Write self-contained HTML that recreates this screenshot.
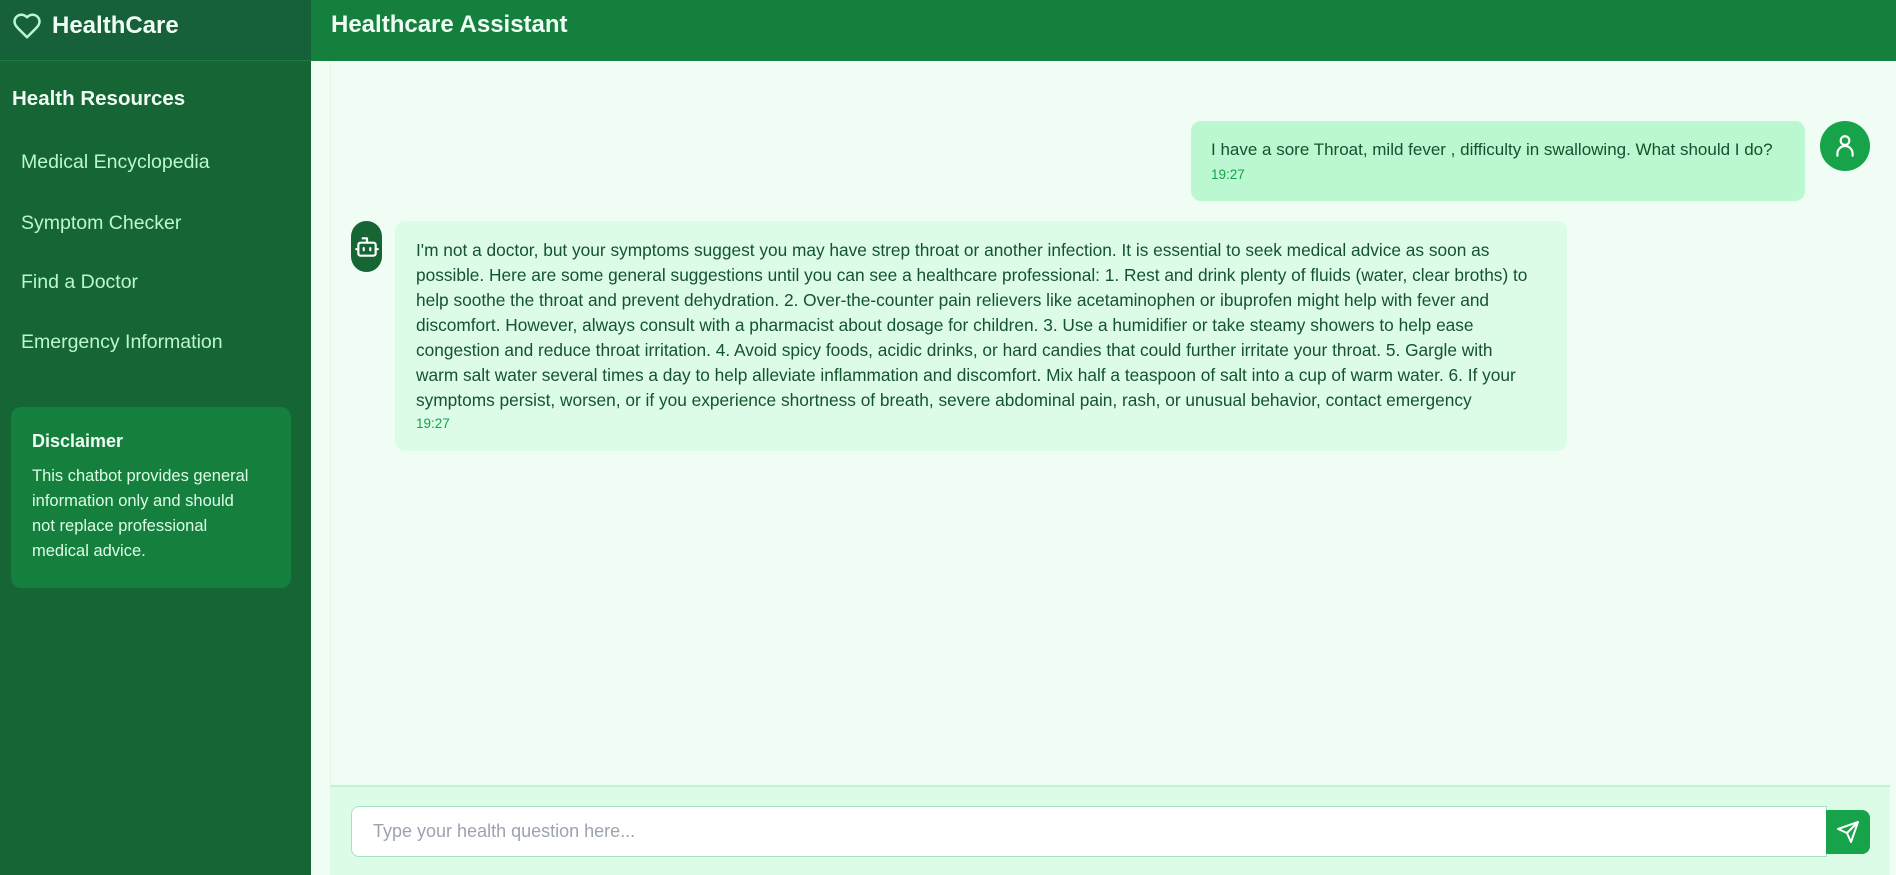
<!DOCTYPE html>
<html><head><meta charset="utf-8"><style>
*{box-sizing:border-box;margin:0;padding:0}
body{width:1896px;height:875px;overflow:hidden;font-family:"Liberation Sans",sans-serif;background:#f0fdf4;position:relative}
.sb{position:absolute;left:0;top:0;width:311px;height:875px;background:#166534}
.sbh{height:61px;background:#17613a;border-bottom:1px solid #1f7a45;display:flex;align-items:center;padding-left:12px;padding-bottom:9px;color:#f0fdf4;font-weight:bold;font-size:24px}
.sbh svg{margin-right:10px}
.hr{position:absolute;left:12px;top:87px;color:#f0fdf4;font-size:20.5px;font-weight:bold}
.nav{position:absolute;left:21px;color:#bbf7d0;font-size:19.5px}
.disc{position:absolute;left:11px;top:407px;width:280px;height:181px;background:#15803d;border-radius:10px;padding:24px 21px;color:#dcfce7}
.disc b{display:block;font-size:18px;color:#f0fdf4;margin-bottom:12px}
.disc p{font-size:16.5px;line-height:25px;white-space:nowrap}
.top{position:absolute;left:311px;top:0;right:0;height:61px;background:#15803d;color:#f0fdf4;font-size:24px;font-weight:bold;padding-left:20px;line-height:50px}
.chat{position:absolute;left:330px;top:61px;width:1560px;height:725px;background:#f0fdf4;border-left:1px solid #e6f7ea}
.ub{position:absolute;left:1191px;top:121px;width:614px;height:80px;background:#bbf7d0;border-radius:10px;padding:19px 20px;color:#14532d;font-size:17px;white-space:nowrap}
.t{font-size:13.5px;color:#16a34a;margin-top:7px}
.ua{position:absolute;left:1820px;top:121px;width:50px;height:50px;border-radius:50%;background:#16a34a;display:flex;align-items:center;justify-content:center}
.ba{position:absolute;left:351px;top:221px;width:31px;height:51px;border-radius:16px;background:#166534;display:flex;align-items:center;justify-content:center}
.bb{position:absolute;left:395px;top:221px;width:1172px;height:230px;background:#dcfce7;border-radius:10px;padding:17px 21px;color:#14532d;font-size:17.3px;line-height:25px;white-space:nowrap;overflow:hidden}
.bb .t{margin-top:0;line-height:22px}
.inp{position:absolute;left:330px;top:785px;width:1560px;height:90px;background:#dcfce7;border-top:2px solid #c6f2d3}
.box{position:absolute;left:351px;top:806px;width:1476px;height:51px;background:#fff;border:1px solid #a7e3bd;border-radius:8px 0 0 8px;padding-left:21px;line-height:49px;color:#9ca3af;font-size:18px}
.send{position:absolute;left:1826px;top:810px;width:44px;height:44px;background:#16a34a;border-radius:0 8px 8px 0;display:flex;align-items:center;justify-content:center}
</style></head><body>
<div class="sb">
<div class="sbh"><svg width="30" height="30" viewBox="0 0 24 24" fill="none" stroke="#bbf7d0" stroke-width="2" stroke-linejoin="round"><path d="M19 14c1.5-1.5 3-3.2 3-5.5A5.5 5.5 0 0 0 16.5 3c-1.8 0-3 .5-4.5 2-1.5-1.5-2.7-2-4.5-2A5.5 5.5 0 0 0 2 8.5c0 2.3 1.5 4 3 5.5l7 7Z"/></svg>HealthCare</div>
<div class="hr">Health Resources</div>
<div class="nav" style="top:151px">Medical Encyclopedia</div>
<div class="nav" style="top:212px">Symptom Checker</div>
<div class="nav" style="top:271px">Find a Doctor</div>
<div class="nav" style="top:331px">Emergency Information</div>
<div class="disc"><b>Disclaimer</b><p>This chatbot provides general<br>information only and should<br>not replace professional<br>medical advice.</p></div>
</div>
<div class="top">Healthcare Assistant</div>
<div class="chat"></div>
<div class="ub">I have a sore Throat, mild fever , difficulty in swallowing. What should I do?<div class="t">19:27</div></div>
<div class="ua"><svg width="26" height="26" viewBox="0 0 24 24" fill="none" stroke="#fff" stroke-width="2" stroke-linecap="round"><circle cx="12" cy="7" r="4"/><path d="M5 21v-2a7 7 0 0 1 14 0v2"/></svg></div>
<div class="ba"><svg width="26" height="26" viewBox="0 0 24 24" fill="none" stroke="#fff" stroke-width="2" stroke-linecap="round" stroke-linejoin="round"><path d="M12 8V4H8"/><rect x="4" y="8" width="16" height="12" rx="2"/><path d="M2 14h2M20 14h2M15 13v2M9 13v2"/></svg></div>
<div class="bb">I'm not a doctor, but your symptoms suggest you may have strep throat or another infection. It is essential to seek medical advice as soon as<br>possible. Here are some general suggestions until you can see a healthcare professional: 1. Rest and drink plenty of fluids (water, clear broths) to<br>help soothe the throat and prevent dehydration. 2. Over-the-counter pain relievers like acetaminophen or ibuprofen might help with fever and<br>discomfort. However, always consult with a pharmacist about dosage for children. 3. Use a humidifier or take steamy showers to help ease<br>congestion and reduce throat irritation. 4. Avoid spicy foods, acidic drinks, or hard candies that could further irritate your throat. 5. Gargle with<br>warm salt water several times a day to help alleviate inflammation and discomfort. Mix half a teaspoon of salt into a cup of warm water. 6. If your<br>symptoms persist, worsen, or if you experience shortness of breath, severe abdominal pain, rash, or unusual behavior, contact emergency<div class="t">19:27</div></div>
<div class="inp"></div>
<div class="box">Type your health question here...</div>
<div class="send"><svg width="24" height="24" viewBox="0 0 24 24" fill="none" stroke="#fff" stroke-width="2" stroke-linejoin="round" stroke-linecap="round"><path d="M22 2 11 13M22 2l-7 20-4-9-9-4Z"/></svg></div>
</body></html>
